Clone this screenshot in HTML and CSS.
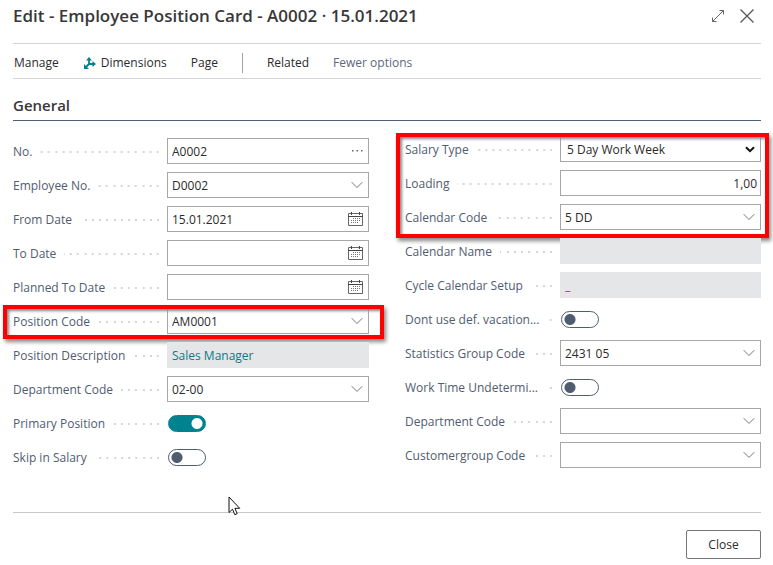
FILE: index.html
```html
<!DOCTYPE html>
<html lang="en">
<head>
<meta charset="utf-8">
<title>Edit - Employee Position Card</title>
<link rel="stylesheet" href="styles.css">
</head>
<body>
<svg class="sprite" aria-hidden="true">
  <symbol id="chevron" viewBox="0 0 12 8"><path d="M.7 1.2 6 6.5l5.300-5.300" fill="none" stroke="#777" stroke-width="1"/></symbol>
  <symbol id="calendar" viewBox="0 0 15 14">
    <path d="M.5 1.500h14v12H.5z" fill="none" stroke="#666"/>
    <path d="M0 4.500h15M3.500 0v3M11.500 0v3" stroke="#444" fill="none"/>
    <path d="M5 6.500h8M3 8.500h10M3 10.500h8" stroke="#777" stroke-dasharray="1 1" fill="none"/>
  </symbol>
</svg>
<main class="card">
  <header class="titlebar">
    <h1>Edit - Employee Position Card - A0002 · 15.01.2021</h1>
    <div class="window-actions">
      <button type="button" aria-label="Expand"><svg width="14" height="14" viewBox="0 0 14 14"><path d="M1.500 12.500l11-11M8.500 1.500h4v4M5.500 12.500h-4v-4" fill="none" stroke="#666"/></svg></button>
      <button type="button" aria-label="Close window"><svg width="16" height="16" viewBox="0 0 16 16"><path d="M1.500 1.500l13 13M14.500 1.500l-13 13" fill="none" stroke="#555" stroke-width="1.300"/></svg></button>
    </div>
  </header>
  <nav class="toolbar">
    <button type="button">Manage</button>
    <button type="button" class="with-icon"><svg width="12" height="12" viewBox="0 0 12 12"><path d="M5 7.500V2M4.500 7H10M5 7L2 10" fill="none" stroke="#00838f" stroke-width="1.800"/><path d="M2 3.500 5 0l3 3.500zM8.500 4l3.500 3-3.500 3zM0 7v5h5z" fill="#00838f"/></svg>Dimensions</button>
    <button type="button">Page</button>
    <span class="divider"></span>
    <button type="button">Related</button>
    <button type="button" class="muted">Fewer options</button>
  </nav>
  <h2>General</h2>
  <form class="columns" id="general">
    <div class="column">
      <div class="field"><label for="no"><span>No.</span></label><div class="box"><input id="no" value="A0002"><button type="button" aria-label="More"><svg width="12" height="8" viewBox="0 0 12 8"><path d="M1 3h1.500v1.500H1zM5.500 3H7v1.500H5.500zM10 3h1.500v1.500H10z" fill="#666"/></svg></button></div></div>
      <div class="field"><label for="emp"><span>Employee No.</span></label><div class="box"><input id="emp" value="D0002"><button type="button" aria-label="Look up"><svg width="12" height="8"><use href="#chevron"/></svg></button></div></div>
      <div class="field"><label for="from"><span>From Date</span></label><div class="box date"><input id="from" value="15.01.2021"><button type="button" aria-label="Pick date"><svg width="15" height="14"><use href="#calendar"/></svg></button></div></div>
      <div class="field"><label for="to"><span>To Date</span></label><div class="box date"><input id="to"><button type="button" aria-label="Pick date"><svg width="15" height="14"><use href="#calendar"/></svg></button></div></div>
      <div class="field"><label for="planned"><span>Planned To Date</span></label><div class="box date"><input id="planned"><button type="button" aria-label="Pick date"><svg width="15" height="14"><use href="#calendar"/></svg></button></div></div>
      <div class="field marked"><label for="pos"><span>Position Code</span></label><div class="box"><input id="pos" value="AM0001"><button type="button" aria-label="Look up"><svg width="12" height="8"><use href="#chevron"/></svg></button></div></div>
      <div class="field"><label for="posd"><span>Position Description</span></label><div class="box readonly"><input id="posd" value="Sales Manager" readonly></div></div>
      <div class="field"><label for="dep"><span>Department Code</span></label><div class="box"><input id="dep" value="02-00"><button type="button" aria-label="Look up"><svg width="12" height="8"><use href="#chevron"/></svg></button></div></div>
      <div class="field"><label for="primary"><span>Primary Position</span></label><input class="toggle" type="checkbox" id="primary" checked></div>
      <div class="field"><label for="skip"><span>Skip in Salary</span></label><input class="toggle" type="checkbox" id="skip"></div>
    </div>
    <div class="column">
      <div class="group marked">
        <div class="field"><label for="type"><span>Salary Type</span></label><div class="box"><select id="type"><option>5 Day Work Week</option></select><svg class="arrow" width="10" height="7" viewBox="0 0 10 7"><path d="M1 1.200l4 4 4-4" fill="none" stroke="#111" stroke-width="2"/></svg></div></div>
        <div class="field"><label for="loading"><span>Loading</span></label><div class="box"><input id="loading" class="number" value="1,00"></div></div>
        <div class="field"><label for="cal"><span>Calendar Code</span></label><div class="box"><input id="cal" value="5 DD"><button type="button" aria-label="Look up"><svg width="12" height="8"><use href="#chevron"/></svg></button></div></div>
      </div>
      <div class="field"><label for="caln"><span>Calendar Name</span></label><div class="box readonly"><input id="caln" readonly></div></div>
      <div class="field"><label for="cycle"><span>Cycle Calendar Setup</span></label><div class="box readonly"><input id="cycle" value="_" readonly></div></div>
      <div class="field"><label for="vac"><span>Dont use def. vacation...</span></label><input class="toggle" type="checkbox" id="vac"></div>
      <div class="field"><label for="stat"><span>Statistics Group Code</span></label><div class="box"><input id="stat" value="2431 05"><button type="button" aria-label="Look up"><svg width="12" height="8"><use href="#chevron"/></svg></button></div></div>
      <div class="field"><label for="work"><span>Work Time Undetermi...</span></label><input class="toggle" type="checkbox" id="work"></div>
      <div class="field"><label for="dep2"><span>Department Code</span></label><div class="box"><input id="dep2"><button type="button" aria-label="Look up"><svg width="12" height="8"><use href="#chevron"/></svg></button></div></div>
      <div class="field"><label for="cust"><span>Customergroup Code</span></label><div class="box"><input id="cust"><button type="button" aria-label="Look up"><svg width="12" height="8"><use href="#chevron"/></svg></button></div></div>
    </div>
  </form>
  <footer><button type="button" class="close">Close</button></footer>
</main>
<svg class="pointer" width="13" height="20" viewBox="0 0 13 20" aria-hidden="true"><path d="M1 1v15.500l3.500-3.300 2.300 5.500 2.400-1-2.300-5.400h4.800z" fill="#fff" stroke="#111"/></svg>
</body>
</html>
```
FILE: styles.css
```css
* { box-sizing: border-box; }
body {
  margin: 0;
  background: #fff;
  color: #2b2b2b;
  font: 12px/16px "Open Sans", "Noto Sans", sans-serif;
}
button, input, select { font: inherit; color: inherit; }
button { border: 0; padding: 0; background: none; display: flex; align-items: center; }
.sprite { position: absolute; width: 0; height: 0; }
.card { padding: 0 12px 0 13px; }

.titlebar {
  display: flex;
  justify-content: space-between;
  align-items: center;
  height: 43px;
  padding-bottom: 12px;
}
h1 { margin: 0; color: #383838; font-size: 17px; line-height: 24px; font-weight: 600; }
.window-actions { display: flex; align-items: center; gap: 14px; padding-right: 6px; }

.toolbar {
  display: flex;
  align-items: center;
  gap: 24px;
  height: 36px;
  padding: 3px 1px 0;
  border-top: 1px solid #d2d4da;
  border-bottom: 1px solid #d2d4da;
}
.toolbar button { gap: 5px; }
.toolbar .with-icon { padding-left: 1px; }
.divider { width: 1px; height: 20px; background: #a0a5b0; }
.muted { color: #5c6880; }

h2 {
  margin: 0 0 15px;
  padding: 15px 0 3px;
  border-bottom: 1px solid #4c6078;
  color: #383838;
  font-size: 15px;
  line-height: 23px;
  font-weight: 600;
}

.columns { display: grid; grid-template-columns: 1fr 1fr; gap: 36px; }
.column, .group { display: flex; flex-direction: column; gap: 8px; }
.column:first-child { padding-top: 2px; }
.field { display: grid; grid-template-columns: 154px 1fr; align-items: center; height: 26px; }
.column:last-child .field { grid-template-columns: 155px 1fr; }
label {
  display: flex;
  align-items: center;
  margin-right: 8px;
  padding-top: 2px;
  color: #505c70;
  white-space: nowrap;
}
label::after {
  content: "";
  flex: 1;
  height: 2px;
  margin-left: 8px;
  background: linear-gradient(270deg, #d3d5da 2px, transparent 2px 7px, #d3d5da 7px 9px, transparent 9px 14px, #d3d5da 14px 16px, transparent 16px 22px, #d3d5da 22px 24px, transparent 24px) right 0 top / 29px 2px;
}
.box {
  position: relative;
  display: flex;
  align-items: center;
  height: 26px;
  padding: 0 5px 0 4px;
  border: 1px solid #a6a6a6;
}
.box input, .box select {
  flex: 1;
  min-width: 0;
  width: 100%;
  height: 24px;
  padding: 0;
  border: 0;
  outline: 0;
  background: none;
  appearance: none;
}
.box select { padding: 1px 0 0 2px; }
.box .number { text-align: right; margin-right: -2px; }
.arrow { pointer-events: none; }
.box.readonly { border-color: #e5e6e8; background: #e5e6e8; color: #0b7a84; }

.toggle {
  appearance: none;
  width: 38px;
  height: 17px;
  margin: 0 0 0 1px;
  border: 1px solid #505c70;
  border-radius: 9px;
  background: radial-gradient(circle at 8px 50%, #505c70 5px, transparent 6px);
}
.toggle:checked {
  border-color: #00838f;
  background: radial-gradient(circle at 28px 50%, #fff 5px, #00838f 6px);
}

.marked { position: relative; }
.marked::after {
  content: "";
  position: absolute;
  inset: -3px -15px -5px -10px;
  border: 4px solid #fe0000;
  box-shadow: 2px 3px 4px #888, inset 2px 2px 3px #888;
  pointer-events: none;
}
.group.marked::after { inset: -3px -8px -8px -9px; }

footer {
  display: flex;
  justify-content: flex-end;
  margin-top: 42px;
  padding-top: 17px;
  border-top: 1px solid #c8c8c8;
}
.close {
  justify-content: center;
  min-width: 75px;
  height: 29px;
  border: 1px solid #777;
  border-radius: 2px;
}
.pointer { position: absolute; left: 228px; top: 496px; }
```
